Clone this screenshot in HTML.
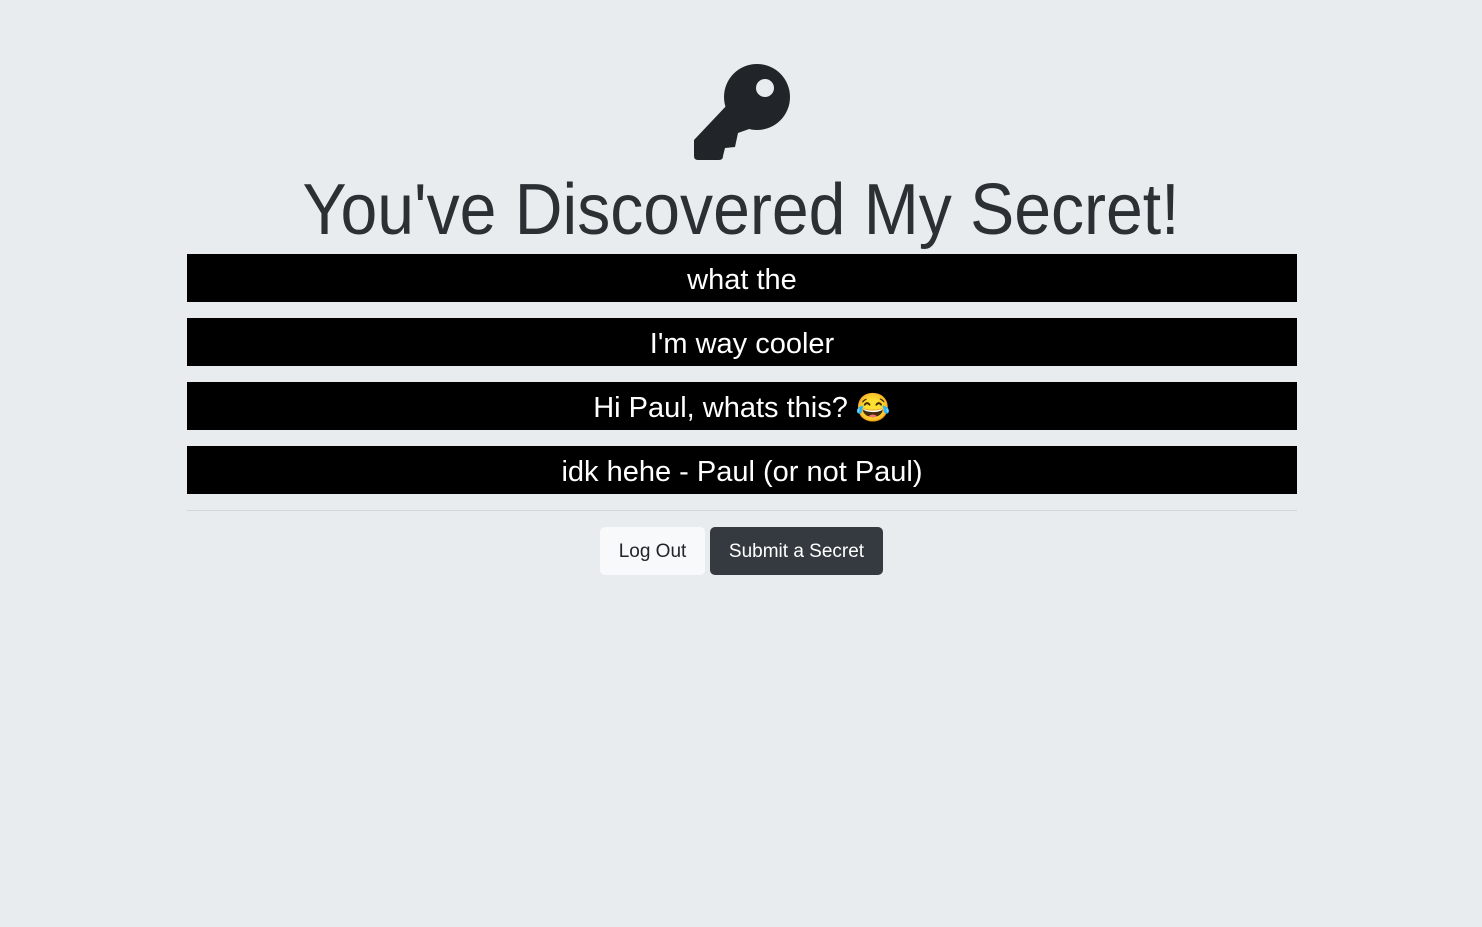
<!DOCTYPE html>
<html><head><style>
body{margin:0;background:#e9ecef;font-family:"Liberation Sans",sans-serif;width:1482px;height:927px;overflow:hidden;position:relative}
.bar{position:absolute;left:187px;width:1110px;height:48px;background:#000;color:#fff;font-size:29px;line-height:52px;text-align:center}
.hr{position:absolute;left:187px;width:1110px;top:510px;height:1px;background:#d3d6d9}
.btn{position:absolute;top:527px;height:48px;line-height:50px;font-size:19px;text-align:center;border-radius:5px}
</style></head><body>
<svg style="position:absolute;left:0;top:0" width="1482" height="260">
<g fill="#212529">
<circle cx="757" cy="97" r="33"/>
<path d="M728 104 L752 128 L738 133 L735 147 L725 148 L723 156 Q723 160 719 160 L698 160 Q694 160 694 156 L694 140 Z"/>
</g>
<circle cx="765" cy="88" r="9" fill="#e9ecef"/>
<text x="741" y="234" text-anchor="middle" font-size="72" fill="#2b3035" textLength="877" lengthAdjust="spacingAndGlyphs" font-family="Liberation Sans, sans-serif">You've Discovered My Secret!</text>
</svg>
<div class="bar" style="top:254px">what the</div>
<div class="bar" style="top:318px">I'm way cooler</div>
<div class="bar" style="top:382px">Hi Paul, whats this? <span style="font-size:28px">😂</span></div>
<div class="bar" style="top:446px">idk hehe - Paul (or not Paul)</div>
<div class="hr"></div>
<div class="btn" style="left:600px;width:105px;background:#f8f9fa;color:#212529">Log Out</div>
<div class="btn" style="left:710px;width:173px;background:#343a40;color:#fff">Submit a Secret</div>
</body></html>
